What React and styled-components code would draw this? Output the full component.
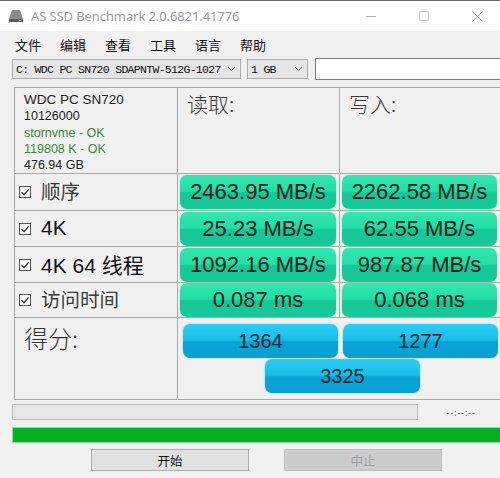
import { Fragment } from 'react';
import styled, { createGlobalStyle } from 'styled-components';

const Global = createGlobalStyle`
  html, body { margin: 0; padding: 0; background: #f0f0f0; }
  body { width: 500px; height: 478px; overflow: hidden; font-family: "Noto Sans", "Noto Sans CJK SC", sans-serif; }
`;

const Window = styled.div`
  width: 500px;
  height: 478px;
  background: #f0f0f0;
  border-top: 1px solid #6d6d6d;
  box-sizing: border-box;
  display: flex;
  flex-direction: column;
`;

const TitleBar = styled.div`
  height: 30px;
  background: #fff;
  display: flex;
  align-items: center;
  padding-left: 8px;
  font-size: 13px;
  color: #9a9a9a;
  gap: 7px;
`;

const TitleText = styled.span`
  flex: 1;
  font-family: "Noto Sans", sans-serif;
  letter-spacing: -0.1px;
`;

const WinBtn = styled.div`
  width: 46px;
  height: 30px;
  display: flex;
  align-items: center;
  justify-content: center;
`;

const MenuBar = styled.div`
  height: 26px;
  display: flex;
  align-items: center;
  padding-left: 15px;
  gap: 19px;
  font-family: "Noto Sans CJK SC", sans-serif;
  font-size: 13px;
  color: #111;
`;

const ComboRow = styled.div`
  display: flex;
  align-items: center;
  height: 24px;
  padding-left: 12px;
  gap: 6px;
`;

const Combo = styled.div`
  width: ${p => p.$w}px;
  height: 20px;
  box-sizing: border-box;
  border: 1px solid #acacac;
  background: #e5e5e5;
  display: flex;
  align-items: center;
  justify-content: space-between;
  padding: 0 4px 0 3px;
  font-family: "Liberation Mono", monospace;
  font-size: 11.5px;
  letter-spacing: -0.7px;
  color: #111;
  white-space: nowrap;
  overflow: hidden;
`;

const TextBox = styled.div`
  flex: 1;
  height: 22px;
  box-sizing: border-box;
  border: 1px solid #7a7a7a;
  border-right: none;
  background: #fff;
  margin-left: 1px;
`;

const Table = styled.div`
  margin: 6px 0 0 14px;
  display: grid;
  grid-template-columns: 163px 162px 161px;
  grid-template-rows: 86px 37px 36px 36px 35px 82px;
  border-top: 1px solid #a9a9a9;
  border-left: 1px solid #a9a9a9;
  box-sizing: border-box;
`;

const Cell = styled.div`
  border-right: 1px solid #a9a9a9;
  border-bottom: 1px solid #a9a9a9;
  box-sizing: border-box;
  min-width: 0;
`;

const InfoCell = styled(Cell)`
  padding: 4px 0 0 9px;
  font-family: "Liberation Sans", Arial, sans-serif;
  font-size: 12.5px;
  line-height: 16.3px;
  color: #222;
`;

const InfoLine = styled.div`
  color: ${p => (p.$ok ? '#3c8a3c' : '#222')};
  font-size: ${p => (p.$big ? '13.5px' : '12.5px')};
`;

const HeadCell = styled(Cell)`
  padding: 0 0 0 9px;
  font-family: "Noto Sans CJK SC", sans-serif;
  font-weight: 300;
  font-size: 21px;
  line-height: 30px;
  color: #3a3a3a;
`;

const LabelCell = styled(Cell)`
  display: flex;
  align-items: center;
  gap: 9px;
  padding-left: 3px;
  font-family: "Liberation Sans", "Noto Sans CJK SC", sans-serif;
  font-size: ${p => (p.$cjk ? '19.5px' : '21px')};
  color: ${p => (p.$cjk ? '#3a3a3a' : '#111')};

  span {
    position: relative;
    top: ${p => (p.$cjk ? '-2px' : '-1px')};
  }
`;

const ValueCell = styled(Cell)`
  display: flex;
  align-items: center;
  padding: 0 3px 0 2px;
`;

const Pill = styled.div`
  flex: 1;
  height: 34px;
  box-sizing: border-box;
  border-radius: 7px;
  display: flex;
  align-items: center;
  justify-content: center;
  font-family: "Liberation Sans", Arial, sans-serif;
  font-size: 22px;
  color: #0b221c;
  background: ${p =>
    p.$blue
      ? 'linear-gradient(#2ccdf3 0%, #17bde8 48%, #08a4d6 52%, #0a9fd1 100%)'
      : 'linear-gradient(#34e6b2 0%, #24dca7 48%, #15c896 52%, #18c898 100%)'};
  box-shadow: 0 0 2px ${p => (p.$blue ? '#6fd6f0' : '#7ae6c6')};
`;

const ScoreLabel = styled(Cell)`
  padding: 0 0 0 9px;
  font-family: "Noto Sans CJK SC", sans-serif;
  font-weight: 300;
  font-size: 24px;
  line-height: 40px;
  color: #333;
`;

const ScoreArea = styled(Cell)`
  grid-column: 2 / 4;
  display: grid;
  grid-template-columns: 155px 155px;
  justify-content: space-between;
  row-gap: 1px;
  padding: 6px 2px 0 5px;
  align-content: start;
`;

const ScorePill = styled(Pill)`
  flex: none;
  width: 155px;
  font-size: 20px;
  color: #0b2630;
  ${p => p.$total && 'grid-column: 1 / 3; justify-self: center; margin-left: 4px;'}
`;

const ProgressRow = styled.div`
  display: flex;
  align-items: center;
  padding-left: 12px;
  margin-top: 4px;
  height: 16px;
`;

const Progress = styled.div`
  width: 406px;
  height: 16px;
  box-sizing: border-box;
  border: 1px solid #bcbcbc;
  background: #e6e6e6;
`;

const Timer = styled.div`
  flex: 1;
  text-align: center;
  font-family: "Liberation Sans", sans-serif;
  font-size: 9.5px;
  color: #444;
  letter-spacing: 0.6px;
  padding-left: 4px;
`;

const GreenBar = styled.div`
  margin: 7px 0 0 12px;
  height: 16px;
  background: #06b025;
  border: 1px solid #9cd7a8;
  border-right: none;
  box-sizing: border-box;
`;

const ButtonRow = styled.div`
  display: flex;
  margin-top: 6px;
  padding-left: 91px;
  gap: 35px;
`;

const Button = styled.div`
  width: 158px;
  height: 22px;
  box-sizing: border-box;
  border: 1px solid ${p => (p.$disabled ? '#bfbfbf' : '#adadad')};
  background: ${p => (p.$disabled ? '#cccccc' : '#e1e1e1')};
  color: ${p => (p.$disabled ? '#9d9d9d' : '#111')};
  display: flex;
  align-items: center;
  justify-content: center;
  font-family: "Noto Sans CJK SC", sans-serif;
  font-size: 12.5px;
`;

const Check = () => (
  <svg width="14" height="14" viewBox="0 0 14 14">
    <rect x="1.5" y="1.5" width="11" height="11" fill="#fff" stroke="#555" strokeWidth="1" />
    <path d="M3.5 7.2 L6 9.7 L10.6 4.4" fill="none" stroke="#333" strokeWidth="1.4" />
  </svg>
);

const DiskIcon = () => (
  <svg width="16" height="14" viewBox="0 0 16 14">
    <path d="M4 1 H12 L15 10 H1 Z" fill="#8a8a8a" />
    <rect x="1" y="10" width="14" height="3" fill="#5a5a5a" />
    <rect x="11" y="11" width="2" height="1" fill="#bbb" />
  </svg>
);

const Chevron = () => (
  <svg width="9" height="6" viewBox="0 0 9 6">
    <path d="M1 1 L4.5 4.5 L8 1" fill="none" stroke="#555" strokeWidth="1" />
  </svg>
);

const rows = [
  { label: '顺序', cjk: true, read: '2463.95 MB/s', write: '2262.58 MB/s' },
  { label: '4K', read: '25.23 MB/s', write: '62.55 MB/s' },
  { label: '4K 64 线程', read: '1092.16 MB/s', write: '987.87 MB/s' },
  { label: '访问时间', cjk: true, read: '0.087 ms', write: '0.068 ms' },
];

export default function App() {
  return (
    <>
      <Global />
      <Window>
        <TitleBar>
          <DiskIcon />
          <TitleText>AS SSD Benchmark 2.0.6821.41776</TitleText>
          <WinBtn>
            <svg width="10" height="10"><path d="M0 5.5 H10" stroke="#b0b0b0" /></svg>
          </WinBtn>
          <WinBtn>
            <svg width="10" height="10"><rect x="0.5" y="0.5" width="9" height="9" fill="none" stroke="#d0d0d0" /></svg>
          </WinBtn>
          <WinBtn>
            <svg width="11" height="11"><path d="M0.5 0.5 L10.5 10.5 M10.5 0.5 L0.5 10.5" stroke="#a8a8a8" /></svg>
          </WinBtn>
        </TitleBar>
        <MenuBar>
          <span>文件</span>
          <span>编辑</span>
          <span>查看</span>
          <span>工具</span>
          <span>语言</span>
          <span>帮助</span>
        </MenuBar>
        <ComboRow>
          <Combo $w={229}>
            <span>C: WDC PC SN720 SDAPNTW-512G-1027</span>
            <Chevron />
          </Combo>
          <Combo $w={61}>
            <span>1 GB</span>
            <Chevron />
          </Combo>
          <TextBox />
        </ComboRow>
        <Table>
          <InfoCell>
            <InfoLine $big>WDC PC SN720</InfoLine>
            <InfoLine>10126000</InfoLine>
            <InfoLine $ok>stornvme - OK</InfoLine>
            <InfoLine $ok>119808 K - OK</InfoLine>
            <InfoLine>476.94 GB</InfoLine>
          </InfoCell>
          <HeadCell>读取:</HeadCell>
          <HeadCell>写入:</HeadCell>
          {rows.map(r => (
            <Fragment key={r.label}>
              <LabelCell $cjk={r.cjk}>
                <Check />
                <span>{r.label}</span>
              </LabelCell>
              <ValueCell>
                <Pill>{r.read}</Pill>
              </ValueCell>
              <ValueCell>
                <Pill>{r.write}</Pill>
              </ValueCell>
            </Fragment>
          ))}
          <ScoreLabel>得分:</ScoreLabel>
          <ScoreArea>
            <ScorePill $blue>1364</ScorePill>
            <ScorePill $blue>1277</ScorePill>
            <ScorePill $blue $total>3325</ScorePill>
          </ScoreArea>
        </Table>
        <ProgressRow>
          <Progress />
          <Timer>--:--:--</Timer>
        </ProgressRow>
        <GreenBar />
        <ButtonRow>
          <Button>开始</Button>
          <Button $disabled>中止</Button>
        </ButtonRow>
      </Window>
    </>
  );
}
